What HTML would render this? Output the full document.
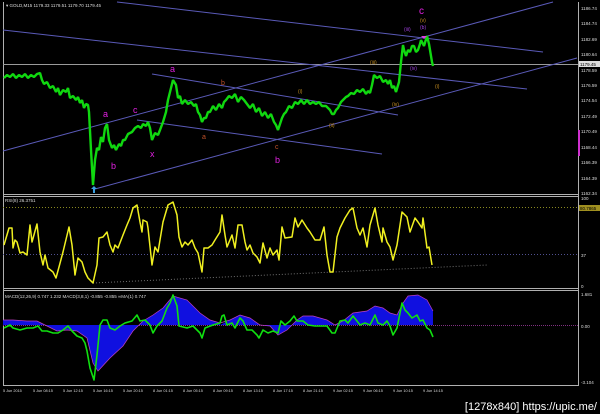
<!DOCTYPE html>
<html><head><meta charset="utf-8"><style>
html,body{margin:0;padding:0;background:#000;width:600px;height:414px;overflow:hidden}
svg{display:block}
text{font-family:"Liberation Sans",sans-serif}
</style></head><body>
<svg width="600" height="414" viewBox="0 0 600 414" xmlns="http://www.w3.org/2000/svg">
<rect width="600" height="414" fill="#000"/>
<g stroke="#b0b0b0" stroke-width="1" fill="none">
<line x1="3.5" y1="2" x2="3.5" y2="386"/>
<line x1="578.5" y1="2" x2="578.5" y2="386"/>
<line x1="3" y1="194.5" x2="578" y2="194.5"/>
<line x1="3" y1="196.5" x2="578" y2="196.5"/>
<line x1="3" y1="288.5" x2="578" y2="288.5"/>
<line x1="3" y1="290.5" x2="578" y2="290.5"/>
<line x1="3" y1="385.5" x2="578" y2="385.5"/>
</g>
<line x1="3" y1="64.5" x2="578" y2="64.5" stroke="#9a9a9a" stroke-width="1"/>
<g stroke="#5a5ab8" stroke-width="1" fill="none">
<line x1="117" y1="2" x2="543" y2="52"/>
<line x1="3" y1="30" x2="527" y2="89"/>
<line x1="3" y1="151" x2="553" y2="2"/>
<line x1="95" y1="189" x2="577" y2="58"/>
<line x1="152" y1="74" x2="398" y2="115"/>
<line x1="137" y1="120" x2="382" y2="154"/>
</g>
<polyline fill="none" stroke="#10d810" stroke-width="2.4" stroke-linejoin="bevel" points="4,78 7,75 10,77 13,74 16,78 19,75 22,77 25,74 28,78 31,75 34,77 37,74 40,73 42,80 44,84 47,82 50,88 53,86 56,92 58,88 60,95 63,90 66,92 68,88 70,98 73,96 76,100 78,97 80,103 82,100 84,108 86,104 88,105 89,112 91,150 93,185 95,160 97,148 99,150 101,137 103,142 105,128 107,124 109,140 112,148 114,145 116,150 119,144 121,146 123,140 125,140 128,134 132,132 135,128 138,126 141,128 143,124 146,126 148,122 150,128 152,140 155,133 158,135 160,130 163,122 166,112 168,100 170,92 173,80 176,85 178,98 180,96 182,104 185,100 188,104 191,102 194,106 196,104 198,112 200,115 202,122 204,118 206,118 208,112 210,112 213,106 216,110 219,104 222,108 224,102 226,100 229,96 232,98 235,94 238,102 241,97 244,100 247,104 250,108 253,104 256,112 259,108 262,116 265,112 268,118 271,114 274,122 276,125 278,130 280,124 282,118 284,114 286,112 289,106 292,108 295,102 298,104 301,100 304,104 307,100 310,104 313,102 316,104 319,102 322,106 326,106 330,110 332,114 334,114 336,110 338,108 341,102 343,100 346,97 348,96 351,93 354,94 357,90 360,92 363,89 366,94 368,91 370,93 372,85 374,75 377,78 380,76 383,82 386,80 388,84 390,80 392,88 394,86 396,92 399,82 401,62 403,45 404,50 406,56 408,50 410,52 412,46 414,46 416,52 418,50 420,44 421,40 424,46 427,36 429,44 430,50 432,62 433,66"/>
<g font-size="9" fill="#e020e0">
<text x="170" y="72">a</text><text x="103" y="117">a</text><text x="133" y="113">c</text>
<text x="111" y="169">b</text><text x="150" y="157">x</text><text x="275" y="163">b</text>
<text x="419" y="14" font-size="10">c</text>
</g>
<g font-size="7" fill="#c0502a">
<text x="221" y="85">b</text><text x="202" y="139">a</text><text x="275" y="149">c</text>
</g>
<g font-size="5" fill="#c89020">
<text x="298" y="93">(i)</text><text x="329" y="127">(ii)</text><text x="370" y="64">(iii)</text>
<text x="392" y="106">(iv)</text><text x="420" y="22">(v)</text><text x="435" y="88">(i)</text>
</g>
<g font-size="5" fill="#a040e0">
<text x="404" y="31">(iii)</text><text x="420" y="29">(b)</text><text x="410" y="70">(iv)</text>
</g>
<path d="M94,186 L91,189 L93,189 L93,193 L95,193 L95,189 L97,189Z" fill="#3aa0e0"/>
<path d="M424,39 L421,36 L427,36Z" fill="#e040e0"/>
<text x="6" y="7" font-size="4.5" fill="#ddd">▾ GOLD,M15  1179.33 1179.51 1179.70 1179.45</text>
<g font-size="4.5" fill="#ddd">
<text x="581" y="10">1186.74</text><text x="581" y="25">1184.74</text><text x="581" y="41">1182.69</text>
<text x="581" y="56">1180.64</text><text x="581" y="72">1178.59</text><text x="581" y="87">1176.59</text>
<text x="581" y="102">1174.54</text><text x="581" y="118">1172.49</text><text x="581" y="133">1170.49</text>
<text x="581" y="149">1168.44</text><text x="581" y="164">1166.39</text><text x="581" y="180">1164.39</text>
<text x="581" y="195">1162.34</text>
</g>
<rect x="579" y="61" width="21" height="6" fill="#ddd"/>
<text x="580" y="66" font-size="4.5" fill="#000">1179.45</text>
<rect x="578" y="130" width="2" height="26" fill="#d030d0"/>
<!-- RSI -->
<text x="5" y="202" font-size="4.5" fill="#ddd">RSI(8) 26.3751</text>
<line x1="3" y1="207.5" x2="578" y2="207.5" stroke="#8a8a20" stroke-dasharray="1,2"/>
<line x1="3" y1="254.5" x2="578" y2="254.5" stroke="#505090" stroke-dasharray="1,2"/>
<line x1="93" y1="283" x2="487" y2="265" stroke="#707070" stroke-dasharray="1,2"/>
<polyline fill="none" stroke="#f0f020" stroke-width="1.5" stroke-linejoin="round" points="4,245 9,228 12,228 13,248 15,240 17,242 20,253 23,252 27,255 30,225 32,242 37,224 40,252 43,265 45,255 48,268 53,272 56,278 59,267 63,252 69,227 72,245 75,275 78,258 82,262 85,272 88,278 93,283 97,265 99,238 103,237 107,232 110,245 113,252 115,245 118,248 123,235 127,225 130,218 133,208 137,205 140,222 142,232 143,220 147,222 148,228 152,265 155,247 158,252 163,222 168,205 173,202 177,215 179,237 182,247 185,242 188,245 192,240 195,248 198,253 202,272 204,248 208,248 212,245 215,240 220,232 222,215 225,235 227,247 232,235 235,248 238,225 242,225 245,242 247,250 250,245 253,253 257,257 260,263 263,243 267,258 270,248 273,255 277,250 279,260 282,227 285,238 292,237 295,218 298,227 302,220 307,228 310,232 315,240 320,240 324,227 327,255 330,272 333,272 337,237 340,228 345,218 350,210 353,208 357,228 360,235 363,228 367,247 370,225 375,208 378,225 382,242 383,228 387,242 390,247 393,260 397,245 402,212 407,217 410,232 415,218 418,222 422,228 423,218 427,248 429,247 432,265"/>
<g font-size="4.5" fill="#ddd"><text x="581" y="200">100</text><text x="581" y="257">37</text><text x="581" y="288">0</text></g>
<rect x="579" y="205" width="21" height="6" fill="#a09020"/>
<text x="580" y="210" font-size="4.5" fill="#000">80.7865</text>
<!-- MACD -->
<text x="5" y="298" font-size="4.5" fill="#ddd">MACD(12,26,9) 0.747 1.232  MACD(3,8,1) -0.855 -0.855  ∞MA(1) 0.747</text>
<line x1="3" y1="325.5" x2="578" y2="325.5" stroke="#803080" stroke-dasharray="1,1"/>
<polygon fill="#1010e0" points="3,320 13,320 27,321 37,321 47,326 57,331 67,330 77,331 87,338 93,363 98,371 110,358 123,346 133,331 143,321 153,315 163,308 173,296 187,300 200,313 210,320 220,323 220,325 230,320 240,315 250,318 260,325 270,326 278,335 287,330 297,320 303,316 313,316 327,320 335,325 343,321 353,313 367,311 375,306 383,308 390,313 397,315 403,303 408,296 418,295 427,300 433,311 433,325 3,325"/>
<polyline fill="none" stroke="#c040c0" stroke-width="0.7" points="3,320 13,320 27,321 37,321 47,326 57,331 67,330 77,331 87,338 93,363 98,371 110,358 123,346 133,331 143,321 153,315 163,308 173,296 187,300 200,313 210,320 220,323 230,320 240,315 250,318 260,325 270,326 278,335 287,330 297,320 303,316 313,316 327,320 335,325 343,321 353,313 367,311 375,306 383,308 390,313 397,315 403,303 408,296 418,295 427,300 433,311"/>
<polyline fill="none" stroke="#10e010" stroke-width="1.6" stroke-linejoin="round" points="4,328 10,325 13,328 20,330 27,328 33,328 38,326 42,331 47,331 53,333 58,333 63,330 68,326 72,331 77,336 82,338 85,343 87,351 90,368 94,380 97,355 100,325 103,320 107,320 110,328 115,330 120,326 125,323 132,321 137,315 140,321 145,320 150,325 153,333 157,326 162,321 167,308 170,303 173,295 177,306 179,326 187,328 193,326 200,333 202,338 205,328 213,325 220,323 222,316 224,315 227,325 232,323 235,328 240,318 243,321 247,330 252,330 257,335 259,338 263,330 268,333 273,331 278,333 281,321 285,325 290,321 294,316 297,321 303,321 308,325 315,326 320,326 327,326 332,333 335,333 340,321 345,320 348,323 353,316 357,321 360,325 365,323 370,325 375,315 378,323 383,325 387,321 390,326 393,335 397,328 402,303 405,310 408,313 412,318 417,315 420,321 423,320 427,328 430,330 433,337"/>
<g font-size="4.5" fill="#ddd"><text x="581" y="296">1.681</text><text x="581" y="328">0.00</text><text x="581" y="384">-3.104</text></g>
<g font-size="3.8" fill="#ddd">
<text x="3" y="392">5 Jun 2015</text><text x="33" y="392">5 Jun 08:15</text><text x="63" y="392">5 Jun 12:15</text>
<text x="93" y="392">5 Jun 16:15</text><text x="123" y="392">5 Jun 20:15</text><text x="153" y="392">8 Jun 01:15</text>
<text x="183" y="392">8 Jun 05:15</text><text x="213" y="392">8 Jun 09:15</text><text x="243" y="392">8 Jun 13:15</text>
<text x="273" y="392">8 Jun 17:15</text><text x="303" y="392">8 Jun 21:15</text><text x="333" y="392">9 Jun 02:15</text>
<text x="363" y="392">9 Jun 06:15</text><text x="393" y="392">9 Jun 10:15</text><text x="423" y="392">9 Jun 14:15</text>
</g>
<text x="597" y="410" font-size="11" fill="#fff" text-anchor="end">[1278x840] https://upic.me/</text>
</svg>
</body></html>
